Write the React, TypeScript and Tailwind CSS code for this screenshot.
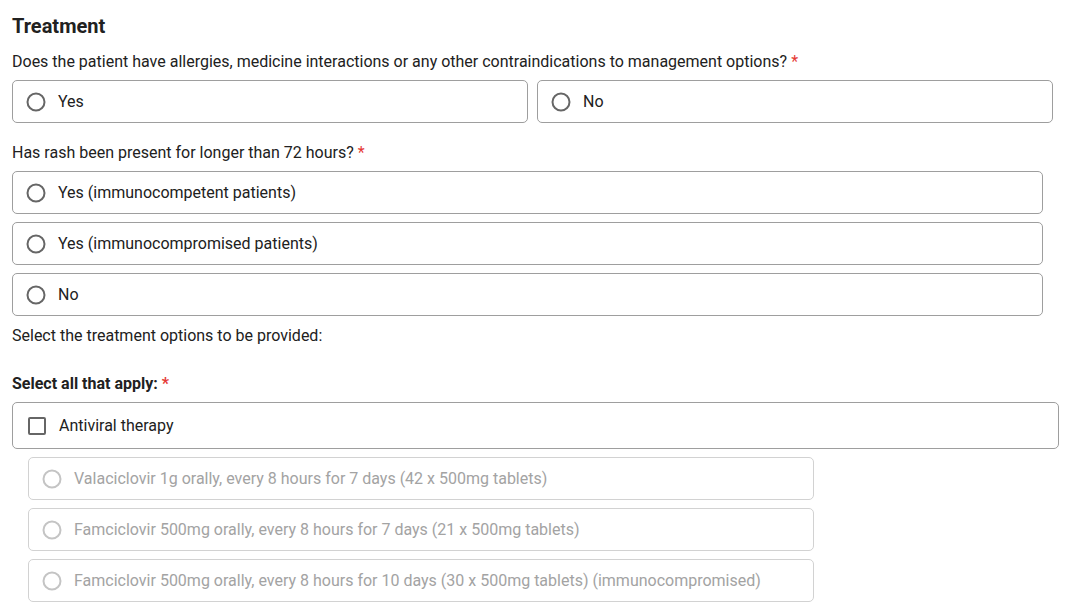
import React from "react";

const font = { fontFamily: "Roboto, 'Liberation Sans', sans-serif" };

const Radio = ({ disabled }: { disabled?: boolean }) => (
  <svg width="20" height="20" viewBox="0 0 20 20" className="shrink-0">
    <circle
      cx="10"
      cy="10"
      r="8.5"
      fill="none"
      stroke={disabled ? "#c4c4c4" : "#666666"}
      strokeWidth="2"
    />
  </svg>
);

const Option = ({
  label,
  className = "",
  disabled,
}: {
  label: string;
  className?: string;
  disabled?: boolean;
}) => (
  <label
    className={`flex items-center gap-[12px] h-[43px] pl-[13px] rounded-[5px] border bg-white ${
      disabled
        ? "border-[#d2d2d2] text-[#a3a3a3]"
        : "border-[#9e9e9e] text-[#212121]"
    } ${className}`}
  >
    <Radio disabled={disabled} />
    <span className="text-[16px] leading-5">{label}</span>
  </label>
);

const Req = () => <span className="text-[#e53935] ml-1">*</span>;

export default function App() {
  return (
    <div className="min-h-screen bg-white pl-[12px] pt-[13px]" style={font}>
      <h2 className="text-[20px] leading-[26px] font-bold text-[#212121]">Treatment</h2>

      {/* allergies */}
      <p className="mt-[13px] text-[16px] leading-5 text-[#212121]">
        Does the patient have allergies, medicine interactions or any other
        contraindications to management options?
        <Req />
      </p>
      <div className="mt-[8px] w-[1041px] grid grid-cols-2 gap-[9px]">
        <Option label="Yes" />
        <Option label="No" />
      </div>

      {/* rash duration */}
      <p className="mt-[20px] text-[16px] leading-5 text-[#212121]">
        Has rash been present for longer than 72 hours?
        <Req />
      </p>
      <div className="mt-[8px] w-[1031px] flex flex-col gap-[8px]">
        <Option label="Yes (immunocompetent patients)" />
        <Option label="Yes (immunocompromised patients)" />
        <Option label="No" />
      </div>

      <p className="mt-[10px] text-[16px] leading-5 text-[#212121]">
        Select the treatment options to be provided:
      </p>

      <p className="mt-[28px] text-[16px] leading-5 font-bold text-[#212121]">
        Select all that apply:
        <Req />
      </p>

      {/* antiviral */}
      <div className="mt-[8px] w-[1047px] h-[47px] flex items-center gap-[13px] pl-[15px] rounded-[5px] border border-[#9e9e9e] text-[#212121]">
        <span className="w-[18px] h-[18px] border-2 border-[#666666] rounded-[2px] shrink-0" />
        <span className="text-[16px] leading-5">Antiviral therapy</span>
      </div>
      <div className="mt-[8px] ml-[16px] w-[786px] flex flex-col gap-[8px]">
        <Option disabled label="Valaciclovir 1g orally, every 8 hours for 7 days (42 x 500mg tablets)" />
        <Option disabled label="Famciclovir 500mg orally, every 8 hours for 7 days (21 x 500mg tablets)" />
        <Option
          disabled
          label="Famciclovir 500mg orally, every 8 hours for 10 days (30 x 500mg tablets) (immunocompromised)"
        />
      </div>
    </div>
  );
}
